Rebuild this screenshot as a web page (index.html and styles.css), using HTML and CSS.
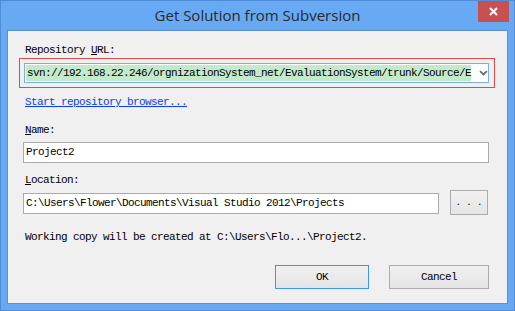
FILE: index.html
```html
<!DOCTYPE html>
<html>
<head>
<meta charset="utf-8">
<link rel="stylesheet" href="styles.css">
</head>
<body>
<div class="window">
  <div class="titlebar">
    <div class="title">Get Solution from Subversion</div>
    <div class="close"><svg width="9" height="9" viewBox="0 0 9 9"><path d="M1 1 L8 8 M8 1 L1 8" stroke="#fff" stroke-width="2"/></svg></div>
  </div>
  <div class="client">
    <div class="label">Repository <u>U</u>RL:</div>
    <div class="url-box">
      <div class="combo">
        <span class="combo-text">svn://192.168.22.246/orgnizationSystem_net/EvaluationSystem/trunk/Source/E</span>
        <svg class="chev" width="9" height="6" viewBox="0 0 9 6"><path d="M1 1 L4.5 4.5 L8 1" stroke="#6a6a6a" stroke-width="1.8" fill="none"/></svg>
      </div>
    </div>
    <div class="link">Start repository browser...</div>
    <div class="label gap-name"><u>N</u>ame:</div>
    <div class="input name-input">Project2</div>
    <div class="label gap-loc"><u>L</u>ocation:</div>
    <div class="loc-row">
      <div class="input loc-input">C:\Users\Flower\Documents\Visual Studio 2012\Projects</div>
      <div class="btn browse">. . .</div>
    </div>
    <div class="label gap-work">Working copy will be created at C:\Users\Flo...\Project2.</div>
    <div class="buttons">
      <div class="btn ok">OK</div>
      <div class="btn cancel">Cancel</div>
    </div>
  </div>
</div>
</body>
</html>
```
FILE: styles.css
```css
html, body { margin: 0; padding: 0; }
body { width: 515px; height: 311px; overflow: hidden; }
.window {
  width: 515px; height: 311px; box-sizing: border-box;
  border: 1px solid #4f8bd6;
  background: #68a9f4;
  display: flex; flex-direction: column;
  position: relative;
}
.titlebar {
  height: 29px; display: flex; align-items: center; justify-content: center;
}
.title {
  font-family: "Open Sans", sans-serif; font-size: 15px; color: #2a2a2a;
  padding-bottom: 1px;
}
.close {
  position: absolute; top: 0; right: 5px; width: 31px; height: 21px;
  background: #c75050; display: flex; align-items: center; justify-content: center;
}
.client {
  margin: 0 6px 6px 6px; flex: 1;
  border: 1px solid #5a8fd2;
  background: #f0f0f0;
  display: flex; flex-direction: column;
  padding: 13px 0 0 11px;
  font-family: "Liberation Mono", monospace; font-size: 11px; letter-spacing: -0.6px;
  color: #000;
}
.label { margin-left: 6px; height: 12px; line-height: 12px; white-space: nowrap; }
.label u { text-underline-offset: 1px; }
.url-box {
  margin-top: 2px; width: 476px; height: 30px; box-sizing: border-box;
  border: 1px solid #e24a4a; padding: 4px 0 0 4px;
}
.combo {
  width: 465px; height: 20px; box-sizing: border-box;
  border: 1px solid #7aaee6; background: #fff;
  display: flex; align-items: center; padding-left: 1px;
}
.combo-text { background: #c3eac9; height: 16px; line-height: 16px; padding-left: 1px; white-space: nowrap; }
.chev { margin-left: 8px; }
.link {
  margin-top: 8px; margin-left: 6px; height: 12px; line-height: 12px;
  color: #0b3ef0; text-decoration: underline; text-underline-offset: 1px;
}
.gap-name { margin-top: 16px; }
.input {
  box-sizing: border-box; height: 21px; border: 1px solid #ababab; background: #fff;
  line-height: 19px; padding-left: 2px; white-space: nowrap;
}
.name-input { margin-top: 6px; margin-left: 4px; width: 466px; }
.gap-loc { margin-top: 11px; }
.loc-row { margin-top: 4px; margin-left: 4px; display: flex; align-items: flex-start; gap: 11px; }
.loc-input { width: 416px; margin-top: 3px; }
.btn {
  box-sizing: border-box; border: 1px solid #acacac;
  background: linear-gradient(#f0f0f0, #e5e5e5);
  display: flex; align-items: center; justify-content: center;
}
.browse { width: 38px; height: 25px; padding-top: 1px; font-size: 9px; letter-spacing: 0; }
.gap-work { margin-top: 16px; }
.buttons { margin-top: 22px; width: 470px; display: flex; justify-content: flex-end; gap: 20px; }
.ok { width: 94px; height: 24px; border-color: #3c96f0; }
.cancel { width: 100px; height: 24px; }
```
